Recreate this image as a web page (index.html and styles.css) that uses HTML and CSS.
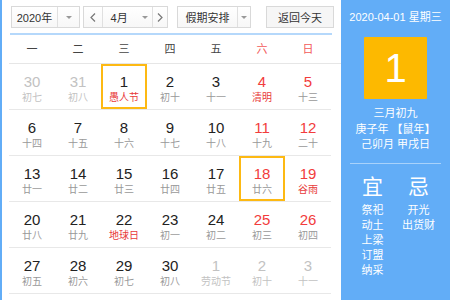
FILE: index.html
```html
<!DOCTYPE html>
<html lang="zh">
<head>
<meta charset="utf-8">
<link rel="stylesheet" href="styles.css">
</head>
<body>
<div class="cal">
  <div class="main">
    <div class="toolbar">
      <div class="sel year"><span class="val">2020年</span><span class="arr"><i></i></span></div>
      <div class="month">
        <span class="nav"><svg width="6" height="9" viewBox="0 0 6 9"><polyline points="5,0.5 1,4.5 5,8.5" fill="none" stroke="#777" stroke-width="1.2"/></svg></span>
        <span class="mval">4月</span>
        <span class="marr"><i></i></span>
        <span class="nav next"><svg width="6" height="9" viewBox="0 0 6 9"><polyline points="1,0.5 5,4.5 1,8.5" fill="none" stroke="#777" stroke-width="1.2"/></svg></span>
      </div>
      <div class="sel hol"><span class="val">假期安排</span><span class="arr"><i></i></span></div>
      <div class="today">返回今天</div>
    </div>
    <div class="line"></div>
    <div class="week">
      <span>一</span><span>二</span><span>三</span><span>四</span><span>五</span><span class="we">六</span><span class="we">日</span>
    </div>
    <div class="days">
      <div class="d other"><b>30</b><small>初七</small></div>
      <div class="d other"><b>31</b><small>初八</small></div>
      <div class="d sel-day"><b>1</b><small class="fest">愚人节</small></div>
      <div class="d"><b>2</b><small>初十</small></div>
      <div class="d"><b>3</b><small>十一</small></div>
      <div class="d red"><b>4</b><small class="fest">清明</small></div>
      <div class="d red"><b>5</b><small>十三</small></div>

      <div class="d"><b>6</b><small>十四</small></div>
      <div class="d"><b>7</b><small>十五</small></div>
      <div class="d"><b>8</b><small>十六</small></div>
      <div class="d"><b>9</b><small>十七</small></div>
      <div class="d"><b>10</b><small>十八</small></div>
      <div class="d red"><b>11</b><small>十九</small></div>
      <div class="d red"><b>12</b><small>二十</small></div>

      <div class="d"><b>13</b><small>廿一</small></div>
      <div class="d"><b>14</b><small>廿二</small></div>
      <div class="d"><b>15</b><small>廿三</small></div>
      <div class="d"><b>16</b><small>廿四</small></div>
      <div class="d"><b>17</b><small>廿五</small></div>
      <div class="d red sel-day"><b>18</b><small>廿六</small></div>
      <div class="d red"><b>19</b><small class="fest">谷雨</small></div>

      <div class="d"><b>20</b><small>廿八</small></div>
      <div class="d"><b>21</b><small>廿九</small></div>
      <div class="d"><b>22</b><small class="fest">地球日</small></div>
      <div class="d"><b>23</b><small>初一</small></div>
      <div class="d"><b>24</b><small>初二</small></div>
      <div class="d red"><b>25</b><small>初三</small></div>
      <div class="d red"><b>26</b><small>初四</small></div>

      <div class="d"><b>27</b><small>初五</small></div>
      <div class="d"><b>28</b><small>初六</small></div>
      <div class="d"><b>29</b><small>初七</small></div>
      <div class="d"><b>30</b><small>初八</small></div>
      <div class="d other"><b>1</b><small>劳动节</small></div>
      <div class="d other"><b>2</b><small>初十</small></div>
      <div class="d other"><b>3</b><small>十一</small></div>
    </div>
  </div>
  <div class="side">
    <div class="sdate">2020-04-01 星期三</div>
    <div class="big">1</div>
    <div class="lunar">
      <div>三月初九</div>
      <div>庚子年 【鼠年】</div>
      <div>己卯月 甲戌日</div>
    </div>
    <div class="sep"></div>
    <div class="yj">
      <div class="col">
        <div class="h">宜</div>
        <div>祭祀</div><div>动土</div><div>上梁</div><div>订盟</div><div>纳采</div>
      </div>
      <div class="col">
        <div class="h">忌</div>
        <div>开光</div><div>出货财</div>
      </div>
    </div>
  </div>
</div>
</body>
</html>
```

FILE: styles.css
```css
html, body {
  margin: 0;
  padding: 0;
}
body {
  width: 450px;
  height: 300px;
  overflow: hidden;
  background: #fff;
  font-family: "Liberation Sans", "Noto Sans CJK SC", sans-serif;
  color: #333;
}
.cal {
  display: flex;
  height: 300px;
  border-left: 2px solid #62adf7;
  box-sizing: border-box;
}
.main {
  width: 339px;
  padding-left: 7px;
  box-sizing: border-box;
}
.toolbar {
  display: flex;
  align-items: center;
  height: 22px;
  margin-top: 6px;
  padding-left: 2px;
  font-size: 11px;
}
.sel, .month, .today {
  display: flex;
  height: 22px;
  box-sizing: border-box;
  border: 1px solid #d9d9d9;
  background: linear-gradient(#fff, #f7f7f7);
  align-items: stretch;
}
.sel .val {
  display: flex;
  align-items: center;
  justify-content: center;
  border-right: 1px solid #e0e0e0;
}
.arr, .marr {
  display: flex;
  align-items: center;
  justify-content: center;
}
.arr i, .marr i {
  width: 0;
  height: 0;
  border-left: 3px solid transparent;
  border-right: 3px solid transparent;
  border-top: 3px solid #999;
}
.year { width: 69px; }
.year .val { width: 45px; }
.year .arr { flex: 1; }
.month {
  margin-left: 3px;
  width: 85px;
}
.nav {
  display: flex;
  align-items: center;
  justify-content: center;
  width: 18px;
  border-right: 1px solid #e0e0e0;
}
.nav.next {
  width: 14px;
  border-right: 0;
  border-left: 1px solid #e0e0e0;
}
.mval {
  display: flex;
  align-items: center;
  padding-left: 8px;
  width: 27px;
}
.marr { width: 16px; }
.hol {
  margin-left: 9px;
  width: 74px;
}
.hol .val { width: 59px; }
.hol .arr { flex: 1; }
.today {
  margin-left: 15px;
  width: 68px;
  align-items: center;
  justify-content: center;
  background: #f6f6f6;
}
.line {
  height: 2px;
  margin: 5px 0 0 1px;
  width: 322px;
  background: #b5d8fb;
}
.week {
  display: grid;
  grid-template-columns: repeat(7, 46px);
  height: 29px;
  box-sizing: border-box;
  border-bottom: 1px solid #e6e6e6;
  font-size: 11px;
  line-height: 28px;
  text-align: center;
  color: #444;
}
.week .we { color: #f25a5a; }
.days {
  display: grid;
  grid-template-columns: repeat(7, 46px);
}
.d {
  height: 46px;
  box-sizing: border-box;
  border-bottom: 1px solid #e8e8e8;
  padding-top: 9px;
  text-align: center;
}
.d b {
  display: block;
  font-weight: normal;
  font-size: 15px;
  line-height: 18px;
  color: #222;
}
.d small {
  display: block;
  font-size: 10px;
  line-height: 14px;
  color: #999;
}
.d.red b { color: #f23c3c; }
.d small.fest { color: #e83a3a; }
.d.other b, .d.other small { color: #c2c2c2; }
.sel-day {
  box-shadow: inset 0 0 0 2px #fdb913;
  padding-top: 9px;
}
.side {
  flex: 1;
  background: #62adf7;
  color: #fff;
  display: flex;
  flex-direction: column;
  align-items: center;
  padding-top: 10px;
  box-sizing: border-box;
}
.sdate {
  font-size: 11px;
  line-height: 14px;
}
.big {
  margin-top: 13px;
  width: 63px;
  height: 62px;
  background: #fdb900;
  font-size: 40px;
  line-height: 62px;
  text-align: center;
  color: #fff;
  border-radius: 1px;
}
.lunar {
  margin-top: 7px;
  font-size: 11px;
  line-height: 15.5px;
  text-align: center;
}
.sep {
  margin-top: 10px;
  width: 91px;
  height: 1px;
  background: rgba(255, 255, 255, 0.45);
}
.yj {
  display: flex;
  margin-top: 11px;
}
.col {
  width: 46px;
  text-align: center;
  font-size: 11px;
  line-height: 15px;
}
.col .h {
  font-size: 21px;
  line-height: 24px;
  margin-bottom: 4px;
}
```
